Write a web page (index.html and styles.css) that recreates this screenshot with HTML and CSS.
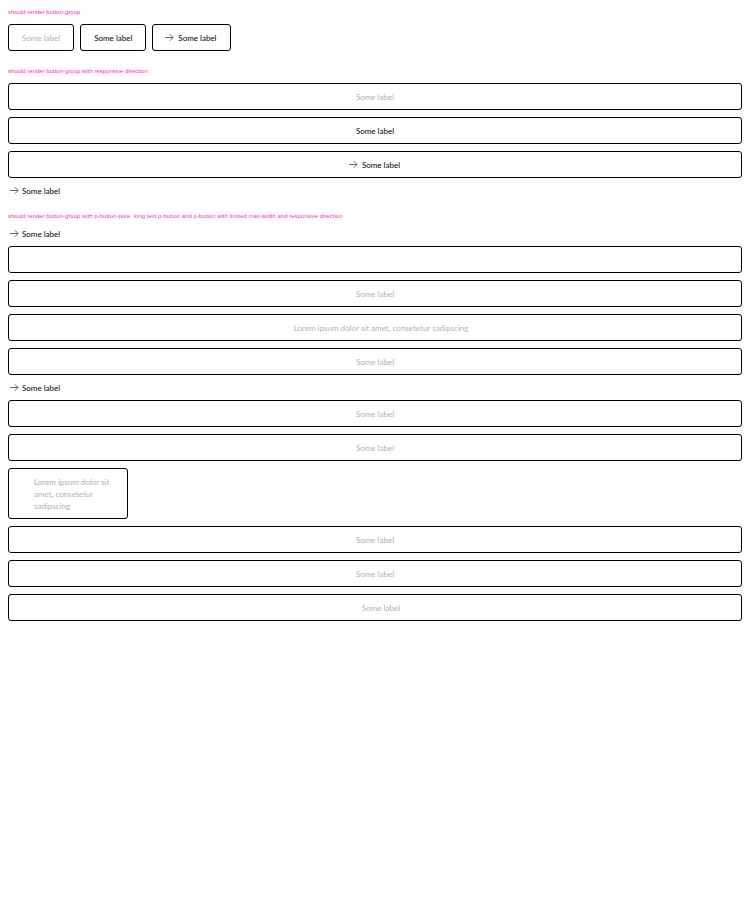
FILE: index.html
```html
<!DOCTYPE html>
<html lang="en">
<head>
<meta charset="utf-8">
<meta name="viewport" content="width=device-width, initial-scale=1">
<title>Button group</title>
<link rel="stylesheet" href="styles.css">
</head>
<body>
<svg class="sprite" aria-hidden="true"><symbol id="arrow" viewBox="0 0 12 12"><path d="M2 5.5h8M6.8 2.2 10.1 5.5 6.8 8.8" fill="none" stroke="currentColor" stroke-width=".8"/></symbol></svg>
<main>
<section>
<h2>should render button-group</h2>
<div class="group row">
<button class="button" type="button" disabled>Some label</button>
<button class="button" type="button">Some label</button>
<button class="button" type="button"><svg class="icon" aria-hidden="true"><use href="#arrow"/></svg><span>Some label</span></button>
</div>
</section>
<section>
<h2>should render button-group with responsive direction</h2>
<div class="group">
<button class="button" type="button" disabled>Some label</button>
<button class="button" type="button">Some label</button>
<button class="button" type="button"><svg class="icon" aria-hidden="true"><use href="#arrow"/></svg><span>Some label</span></button>
<button class="pure" type="button"><svg class="icon" aria-hidden="true"><use href="#arrow"/></svg><span>Some label</span></button>
</div>
</section>
<section>
<h2>should render button-group with p-button-pure, long text p-button and p-button with limited max-width and responsive direction</h2>
<div class="group">
<button class="pure" type="button"><svg class="icon" aria-hidden="true"><use href="#arrow"/></svg><span>Some label</span></button>
<button class="button" type="button"></button>
<button class="button" type="button" disabled>Some label</button>
<button class="button" type="button" disabled><svg class="icon" aria-hidden="true"><use href="#arrow"/></svg><span>Lorem ipsum dolor sit amet, consetetur sadipscing</span></button>
<button class="button" type="button" disabled>Some label</button>
<button class="pure" type="button"><svg class="icon" aria-hidden="true"><use href="#arrow"/></svg><span>Some label</span></button>
<button class="button" type="button" disabled>Some label</button>
<button class="button" type="button" disabled>Some label</button>
<button class="button limited" type="button" disabled><svg class="icon" aria-hidden="true"><use href="#arrow"/></svg><span>Lorem ipsum dolor sit amet, consetetur sadipscing</span></button>
<button class="button" type="button" disabled>Some label</button>
<button class="button" type="button" disabled>Some label</button>
<button class="button" type="button" disabled><svg class="icon" aria-hidden="true"><use href="#arrow"/></svg><span>Some label</span></button>
</div>
</section>
</main>
</body>
</html>
```
FILE: styles.css
```css
* { box-sizing: border-box; }
body {
  margin: 8px;
  background: #fff;
  color: #000;
  font: 8px/12px Lato, Roboto, sans-serif;
}
.sprite { position: absolute; width: 0; height: 0; }
main {
  display: flex;
  flex-direction: column;
  gap: 16px;
}
h2 {
  margin: 0 0 8px;
  color: #ff1fa5;
  font: 400 6px/8px "Liberation Sans", sans-serif;
}
.group {
  display: flex;
  flex-direction: column;
  gap: 7px;
}
.row {
  flex-flow: row wrap;
  gap: 6px;
}
.button, .pure {
  display: flex;
  align-items: center;
  margin: 0;
  background: none;
  color: inherit;
  font: inherit;
  text-align: left;
}
.button {
  justify-content: center;
  min-height: 27px;
  padding: 6px 13px;
  border: 1px solid #000;
  border-radius: 3px;
}
.button:disabled { color: #b0b1b2; }
.limited {
  align-items: flex-start;
  max-width: 120px;
  padding-top: 7px;
}
.icon {
  flex: none;
  width: 12px;
  height: 12px;
  color: #444;
}
.button .icon { margin: 0 3px 0 -3px; }
.button:disabled .icon { color: #fcfcfc; }
.pure {
  align-self: flex-start;
  gap: 2px;
  height: 11px;
  padding: 0;
  border: 0;
}
```
